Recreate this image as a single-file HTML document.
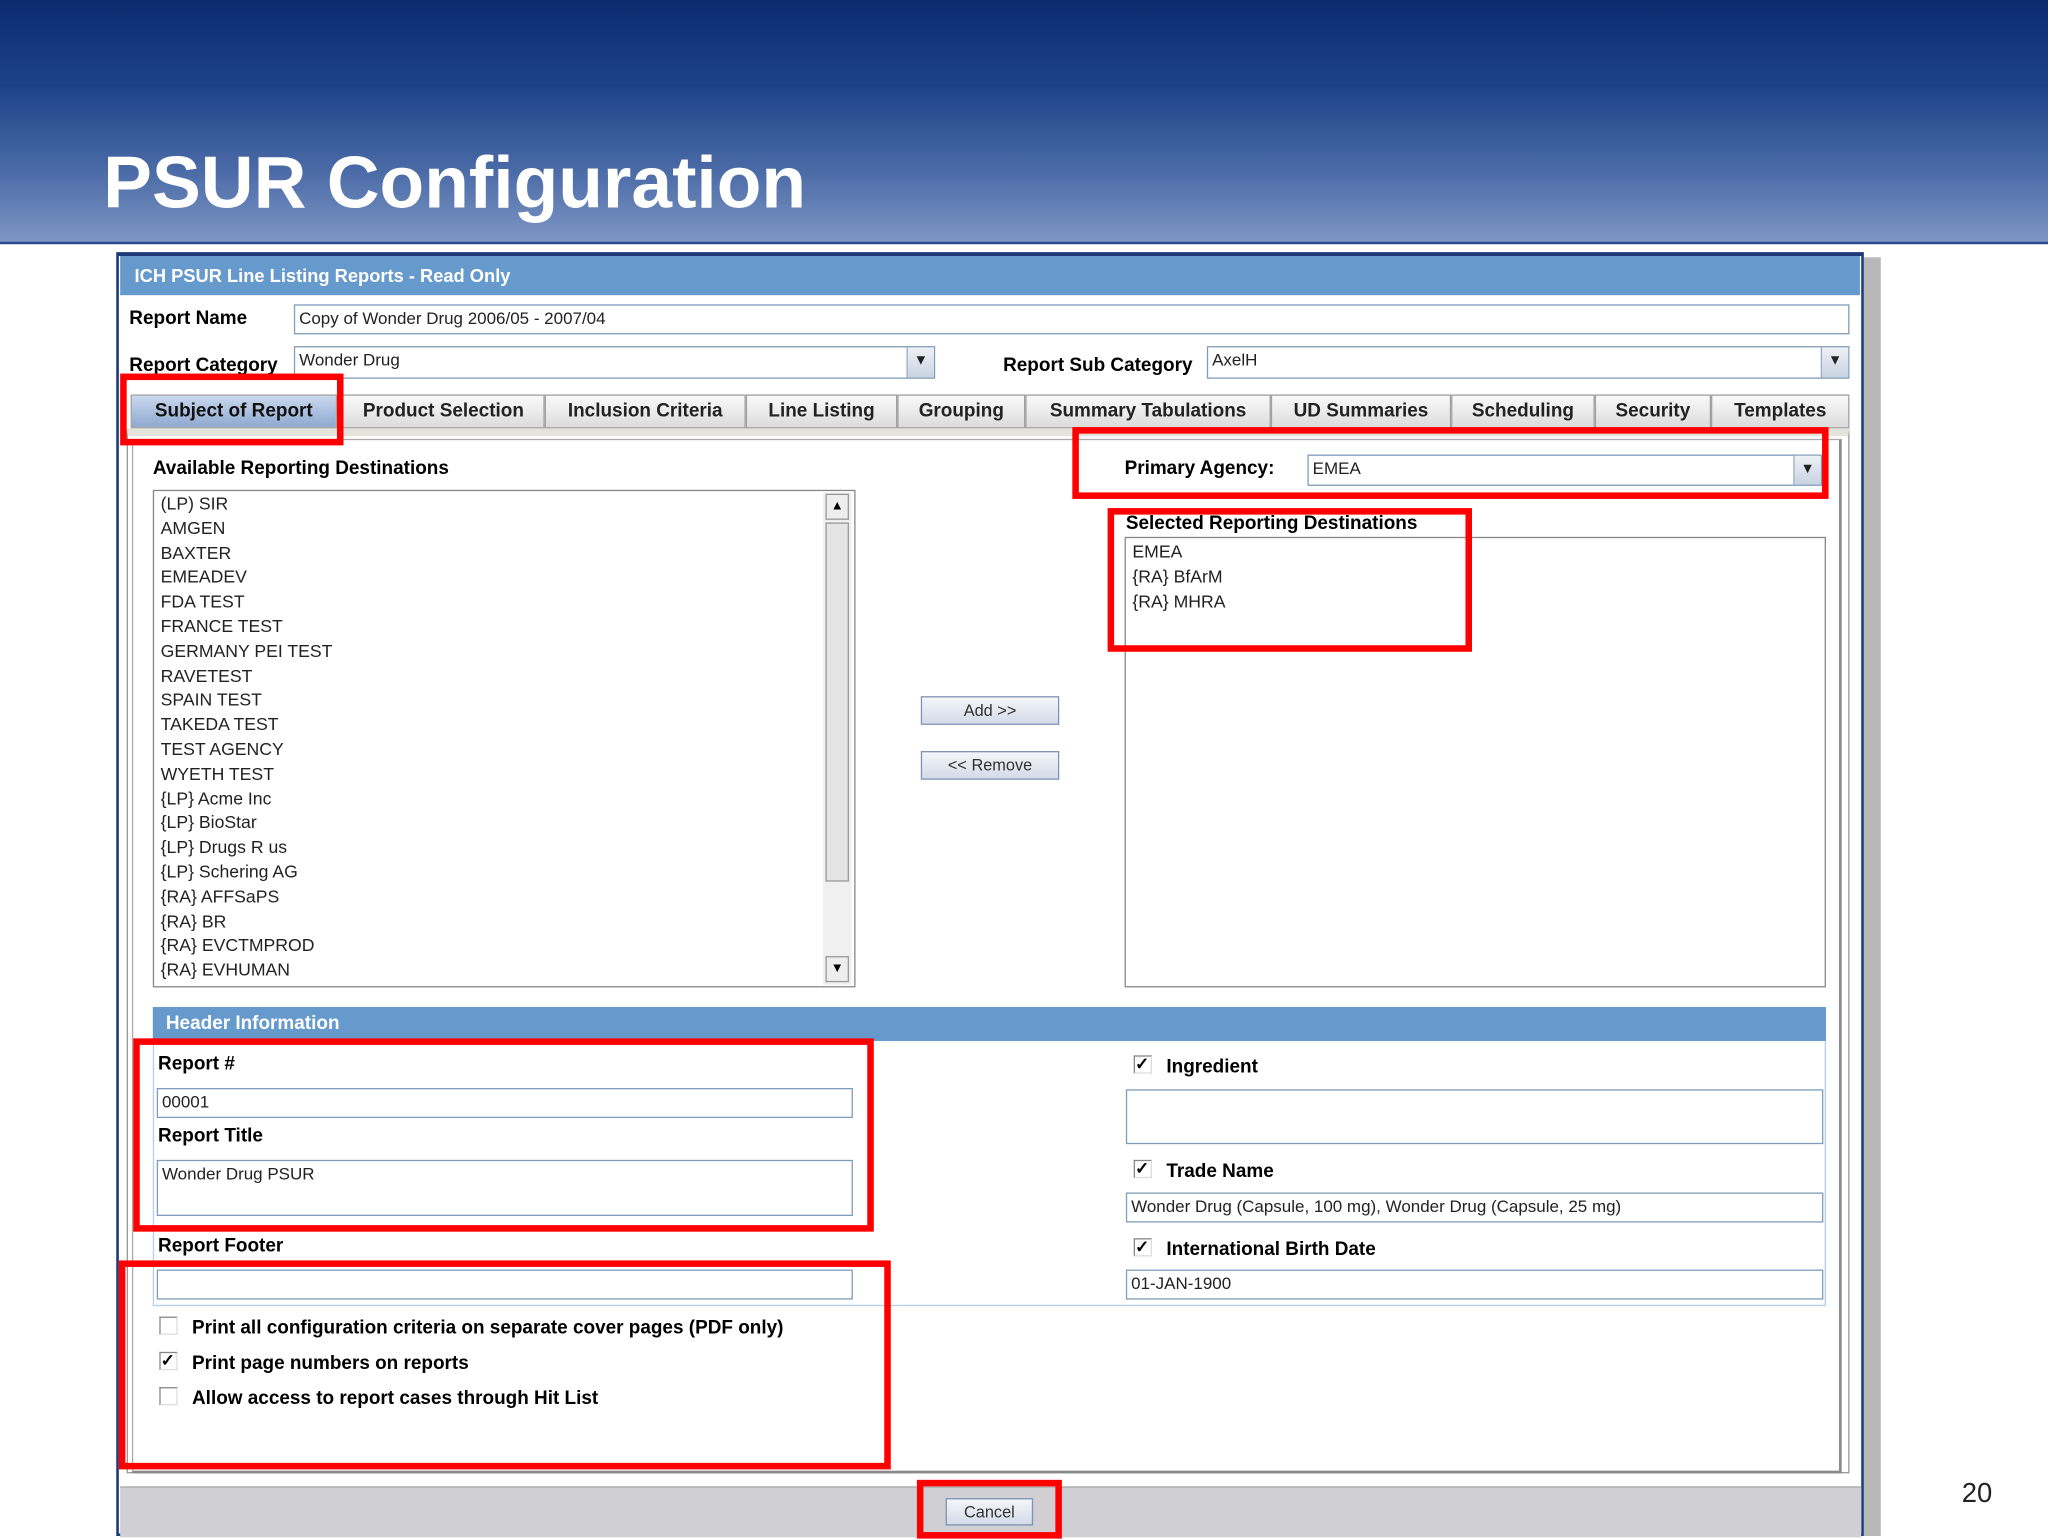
<!DOCTYPE html>
<html><head><meta charset="utf-8"><style>
html,body{margin:0;padding:0;width:2048px;height:1536px;overflow:hidden;background:#fff}
#st{position:absolute;left:0;top:0;width:1568px;height:1176px;transform:scale(1.306122);transform-origin:0 0;font-family:"Liberation Sans",sans-serif;color:#000}
.a{position:absolute}
.t{position:absolute;font-size:14px;white-space:nowrap;line-height:16px}
.b{font-weight:bold;font-size:14.5px}
.in{position:absolute;background:#fff;border:1px solid #7f9db9;box-sizing:border-box;font-size:13px;padding:2px 3px;color:#222;white-space:nowrap}
.sel .ar{position:absolute;right:0;top:0;bottom:0;width:20px;background:linear-gradient(#eef1f6,#c9d3e3);border-left:1px solid #9aaac4;text-align:center;font-size:11px;line-height:20px}
.red{position:absolute;border:5px solid #f00;box-sizing:border-box}
.tab{position:absolute;top:302px;height:26px;background:linear-gradient(#fafafa,#dcdcdc);border:1px solid #a0a0a0;box-sizing:border-box;font-size:14.5px;font-weight:bold;color:#222;text-align:center;line-height:25px}
.btn{position:absolute;background:linear-gradient(#f4f6fa,#d4dbe8);border:1px solid #7f93b3;box-sizing:border-box;font-size:12.5px;text-align:center;color:#333;line-height:20px}
.cb{position:absolute;width:12px;height:12px;border:1px solid #888;border-right-color:#ddd;border-bottom-color:#ddd;background:#fff;font-size:13px;line-height:11px;font-weight:bold}
.li{font-size:13.5px;line-height:18.8px;color:#222}
</style></head><body><div id="st">
<div class="a" style="left:0;top:0;width:1568px;height:185px;background:linear-gradient(180deg,#0c2a6e 0%,#1d4288 35%,#4a6aa6 70%,#7d96c4 100%)"></div>
<div class="a" style="left:0;top:185px;width:1568px;height:2px;background:#2a4a8c"></div>
<div class="t" style="left:79px;top:107px;font-size:56px;line-height:66px;font-weight:bold;color:#fff">PSUR Configuration</div>

<div class="a" style="left:1427px;top:197px;width:13px;height:979px;background:#b8b8b8"></div>
<div class="a" style="left:89px;top:193px;width:1338px;height:983px;background:#fff;border:2px solid #1e3a7a;border-top-width:3px;box-sizing:border-box"></div>
<div class="a" style="left:92px;top:196px;width:1332px;height:30px;background:#6699cc"></div>
<div class="t" style="left:103px;top:203px;color:#fff;font-weight:bold;font-size:14px">ICH PSUR Line Listing Reports - Read Only</div>

<div class="t b" style="left:99px;top:236px">Report Name</div>
<div class="in" style="left:225px;top:233px;width:1191px;height:23px">Copy of Wonder Drug 2006/05 - 2007/04</div>
<div class="t b" style="left:99px;top:272px">Report Category</div>
<div class="in sel" style="left:225px;top:265px;width:491px;height:25px">Wonder Drug<div class="ar">&#9660;</div></div>
<div class="t b" style="left:768px;top:272px">Report Sub Category</div>
<div class="in sel" style="left:924px;top:265px;width:492px;height:25px">AxelH<div class="ar">&#9660;</div></div>

<div class="tab" style="left:100px;width:158px;background:linear-gradient(#c9d8ee,#8fa9d0);color:#111">Subject of Report</div>
<div class="tab" style="left:262px;width:155px">Product Selection</div>
<div class="tab" style="left:417px;width:154px">Inclusion Criteria</div>
<div class="tab" style="left:571px;width:116px">Line Listing</div>
<div class="tab" style="left:687px;width:98px">Grouping</div>
<div class="tab" style="left:785px;width:188px">Summary Tabulations</div>
<div class="tab" style="left:973px;width:138px">UD Summaries</div>
<div class="tab" style="left:1111px;width:110px">Scheduling</div>
<div class="tab" style="left:1221px;width:89px">Security</div>
<div class="tab" style="left:1310px;width:106px">Templates</div>
<div class="a" style="left:97px;top:328px;width:1319px;height:800px;border:1px solid #999;border-top:6px solid #e4e4dc;box-sizing:border-box"></div>
<div class="a" style="left:101px;top:336px;width:1309px;height:792px;border:1px solid #aaa;border-right:2px solid #888;border-bottom:2px solid #888;box-sizing:border-box"></div>

<div class="t b" style="left:117px;top:351px">Available Reporting Destinations</div>
<div class="a" style="left:117px;top:375px;width:538px;height:381px;border:1px solid #888;box-sizing:border-box;background:#fff"></div>
<div class="a" style="left:630px;top:377px;width:22px;height:377px;background:#f0f0f0"></div>
<div class="a" style="left:632px;top:378px;width:18px;height:20px;border:1px solid #999;background:#eee;box-sizing:border-box;font-size:10px;text-align:center;line-height:18px">&#9650;</div>
<div class="a" style="left:632px;top:400px;width:18px;height:275px;border:1px solid #999;background:#e4e4e4;box-sizing:border-box"></div>
<div class="a" style="left:632px;top:732px;width:18px;height:20px;border:1px solid #999;background:#eee;box-sizing:border-box;font-size:10px;text-align:center;line-height:18px">&#9660;</div>
<div class="t li" style="left:123px;top:377px">(LP) SIR<br>AMGEN<br>BAXTER<br>EMEADEV<br>FDA TEST<br>FRANCE TEST<br>GERMANY PEI TEST<br>RAVETEST<br>SPAIN TEST<br>TAKEDA TEST<br>TEST AGENCY<br>WYETH TEST<br>{LP} Acme Inc<br>{LP} BioStar<br>{LP} Drugs R us<br>{LP} Schering AG<br>{RA} AFFSaPS<br>{RA} BR<br>{RA} EVCTMPROD<br>{RA} EVHUMAN</div>

<div class="btn" style="left:705px;top:533px;width:106px;height:22px">Add &gt;&gt;</div>
<div class="btn" style="left:705px;top:575px;width:106px;height:22px">&lt;&lt; Remove</div>

<div class="t b" style="left:861px;top:351px">Primary Agency:</div>
<div class="in sel" style="left:1001px;top:348px;width:394px;height:24px">EMEA<div class="ar">&#9660;</div></div>
<div class="t b" style="left:862px;top:393px">Selected Reporting Destinations</div>
<div class="a" style="left:861px;top:411px;width:537px;height:345px;border:1px solid #888;box-sizing:border-box;background:#fff"></div>
<div class="t li" style="left:867px;top:414px">EMEA<br>{RA} BfArM<br>{RA} MHRA</div>

<div class="a" style="left:117px;top:771px;width:1281px;height:26px;background:#6699cc"></div>
<div class="t" style="left:127px;top:776px;color:#fff;font-weight:bold;font-size:14.5px">Header Information</div>
<div class="a" style="left:117px;top:797px;width:1281px;height:203px;border:1px solid #b7cfe9;border-top:none;box-sizing:border-box"></div>

<div class="t b" style="left:121px;top:807px">Report #</div>
<div class="in" style="left:120px;top:833px;width:533px;height:23px">00001</div>
<div class="t b" style="left:121px;top:862px">Report Title</div>
<div class="in" style="left:120px;top:888px;width:533px;height:43px">Wonder Drug PSUR</div>
<div class="t b" style="left:121px;top:946px">Report Footer</div>
<div class="in" style="left:120px;top:972px;width:533px;height:23px"></div>

<div class="cb" style="left:868px;top:808px">&#10003;</div>
<div class="t b" style="left:893px;top:809px">Ingredient</div>
<div class="in" style="left:862px;top:834px;width:534px;height:42px"></div>
<div class="cb" style="left:868px;top:888px">&#10003;</div>
<div class="t b" style="left:893px;top:889px">Trade Name</div>
<div class="in" style="left:862px;top:913px;width:534px;height:23px">Wonder Drug (Capsule, 100 mg), Wonder Drug (Capsule, 25 mg)</div>
<div class="cb" style="left:868px;top:948px">&#10003;</div>
<div class="t b" style="left:893px;top:949px">International Birth Date</div>
<div class="in" style="left:862px;top:972px;width:534px;height:23px">01-JAN-1900</div>

<div class="cb" style="left:122px;top:1008px"></div>
<div class="t b" style="left:147px;top:1009px">Print all configuration criteria on separate cover pages (PDF only)</div>
<div class="cb" style="left:122px;top:1035px">&#10003;</div>
<div class="t b" style="left:147px;top:1036px">Print page numbers on reports</div>
<div class="cb" style="left:122px;top:1062px"></div>
<div class="t b" style="left:147px;top:1063px">Allow access to report cases through Hit List</div>

<div class="a" style="left:92px;top:1138px;width:1333px;height:38px;background:#cfcfd4;border-top:1px solid #aaa"></div>
<div class="btn" style="left:724px;top:1147px;width:67px;height:21px">Cancel</div>

<div class="red" style="left:92px;top:286px;width:171px;height:55px"></div>
<div class="red" style="left:821px;top:327px;width:579px;height:55px"></div>
<div class="red" style="left:848px;top:389px;width:279px;height:110px"></div>
<div class="red" style="left:102px;top:795px;width:567px;height:148px"></div>
<div class="red" style="left:91px;top:965px;width:591px;height:160px"></div>
<div class="red" style="left:702px;top:1133px;width:111px;height:45px"></div>

<div class="t" style="left:1502px;top:1132px;font-size:21px;line-height:24px;color:#222">20</div>
</div></body></html>
